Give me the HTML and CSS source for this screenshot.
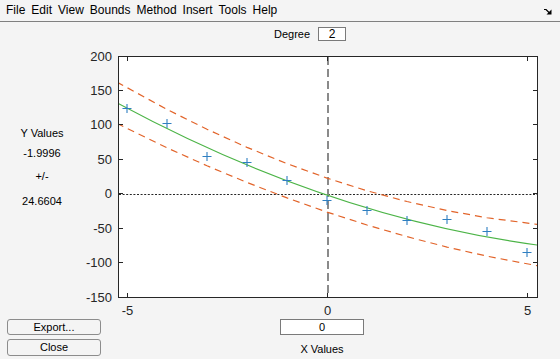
FILE: index.html
```html
<!DOCTYPE html>
<html>
<head>
<meta charset="utf-8">
<link rel="stylesheet" href="styles.css">
</head>
<body>
<div class="window">
  <div class="menubar">
    <span class="menu">File</span>
    <span class="menu">Edit</span>
    <span class="menu">View</span>
    <span class="menu">Bounds</span>
    <span class="menu">Method</span>
    <span class="menu">Insert</span>
    <span class="menu">Tools</span>
    <span class="menu">Help</span>
    <svg class="dock" width="8" height="6" viewBox="0 0 8 6">
      <path d="M0 0.5 H2 L5.5 4" fill="none" stroke="#000" stroke-width="1.2"/>
      <path d="M7.5 0.5 V5.5 H2.5 Z" fill="#000"/>
    </svg>
  </div>

  <div class="degree-row">
    <span class="degree-label">Degree</span>
    <span class="field degree-field">2</span>
  </div>

  <div class="main">
    <div class="yinfo">
      <div class="yline">Y Values</div>
      <div class="yline">-1.9996</div>
      <div class="yline pm">+/-</div>
      <div class="yline sd">24.6604</div>
    </div>
    <svg class="plot" width="476" height="275" viewBox="0 0 476 275">
      <defs>
        <clipPath id="frameclip"><rect x="35" y="13" width="418" height="240"/></clipPath>
      </defs>
      <rect x="34.5" y="12.5" width="419" height="241" fill="#fff"/>
      <g clip-path="url(#frameclip)">
        <line x1="35" y1="150.5" x2="453" y2="150.5" stroke="#262626" stroke-width="1" stroke-dasharray="2 1.6"/>
        <line x1="244" y1="13" x2="244" y2="253" stroke="#8a8a8a" stroke-width="2" stroke-dasharray="8 4"/>
        <polyline fill="none" stroke="#e2642a" stroke-width="1.2" stroke-dasharray="7 5"
          points="33,38.13 83,65.40 123,85.27 163,103.36 203,119.64 243,134.10 283,146.73 323,157.54 363,166.54 403,173.75 453,180.35"/>
        <polyline fill="none" stroke="#e2642a" stroke-width="1.2" stroke-dasharray="7 5"
          points="33,79.44 83,103.80 123,121.79 163,138.48 203,153.89 243,168.06 283,180.98 323,192.65 363,203.06 403,212.16 453,221.67"/>
        <path d="M33 58.8 Q243 172.3 453 201" fill="none" stroke="#4cb447" stroke-width="1.2"/>
        <path fill="none" stroke="#2f7fc1" stroke-width="1.1"
          d="M38.5 64.5 h9 M43 60 v9
             M78.5 79.5 h9 M83 75 v9
             M118.5 112.5 h9 M123 108 v9
             M158.5 118.5 h9 M163 114 v9
             M198.5 136.5 h9 M203 132 v9
             M238.5 156.5 h9 M243 152 v9
             M278.5 166.5 h9 M283 162 v9
             M318.5 176.5 h9 M323 172 v9
             M358.5 175.5 h9 M363 171 v9
             M398.5 187.5 h9 M403 183 v9
             M438.5 208.5 h9 M443 204 v9"/>
      </g>
      <rect x="34.5" y="12.5" width="419" height="241" fill="none" stroke="#262626" stroke-width="1"/>
      <path fill="none" stroke="#262626" stroke-width="1"
        d="M43.5 13 v4 M243.5 13 v4 M443.5 13 v4
           M43.5 253 v-4 M243.5 253 v-4 M443.5 253 v-4
           M35 46.5 h4 M35 80.5 h4 M35 115.5 h4 M35 149.5 h4 M35 184.5 h4 M35 218.5 h4
           M453 46.5 h-4 M453 80.5 h-4 M453 115.5 h-4 M453 149.5 h-4 M453 184.5 h-4 M453 218.5 h-4"/>
      <g class="ticklabel" text-anchor="end">
        <text x="28" y="12.5" dominant-baseline="central">200</text>
        <text x="28" y="46.5" dominant-baseline="central">150</text>
        <text x="28" y="80.9" dominant-baseline="central">100</text>
        <text x="28" y="115.3" dominant-baseline="central">50</text>
        <text x="28" y="149.7" dominant-baseline="central">0</text>
        <text x="28" y="184.1" dominant-baseline="central">-50</text>
        <text x="28" y="218.6" dominant-baseline="central">-100</text>
        <text x="28" y="253" dominant-baseline="central">-150</text>
      </g>
      <g class="ticklabel" text-anchor="middle">
        <text x="43.5" y="266.5" dominant-baseline="central">-5</text>
        <text x="243.5" y="266.5" dominant-baseline="central">0</text>
        <text x="443.5" y="266.5" dominant-baseline="central">5</text>
      </g>
    </svg>
  </div>

  <div class="bottom">
    <button class="btn export">Export...</button>
    <div class="field xval">0</div>
    <button class="btn close">Close</button>
    <div class="xlabel">X Values</div>
  </div>
</div>
</body>
</html>
```

FILE: styles.css
```css
html, body {
  margin: 0;
  padding: 0;
  background: #f4f4f4;
  overflow: hidden;
}

.window {
  width: 560px;
  height: 359px;
  font-family: "Liberation Sans", Arial, sans-serif;
  font-size: 11px;
  color: #1a1a1a;
  display: flex;
  flex-direction: column;
}

.menubar {
  height: 21px;
  line-height: 20px;
  border-bottom: 1px solid #808080;
  display: flex;
  align-items: flex-start;
  padding-left: 3px;
  font-size: 12px;
  color: #000;
}

.menu {
  padding: 0 3px;
}

.dock {
  margin-left: auto;
  margin-right: 8px;
  margin-top: 9px;
}

.degree-row {
  height: 22px;
  display: flex;
  align-items: flex-start;
  padding-left: 274px;
  padding-top: 5px;
  box-sizing: border-box;
}

.degree-label {
  line-height: 14px;
  width: 44px;
  color: #000;
}

.field {
  box-sizing: border-box;
  background: #fff;
  border: 1px solid #7a7a7a;
  text-align: center;
  color: #000;
}

.degree-field {
  width: 28px;
  height: 14px;
  line-height: 13px;
  font-size: 12px;
}

.main {
  height: 275px;
  display: flex;
}

.yinfo {
  width: 84px;
  padding-top: 79px;
  box-sizing: border-box;
  text-align: center;
  color: #000;
}

.yline {
  line-height: 20px;
}

.yline.pm {
  margin-top: 3px;
}

.yline.sd {
  margin-top: 5px;
}

.plot {
  display: block;
}

.ticklabel {
  font-family: "Liberation Sans", Arial, sans-serif;
  font-size: 13px;
  fill: #262626;
}

.bottom {
  display: grid;
  grid-template-columns: 7px 94px 179px 84px 1fr;
  grid-template-rows: 16px 17px;
  row-gap: 4px;
}

.btn {
  font-family: "Liberation Sans", Arial, sans-serif;
  font-size: 11px;
  color: #000;
  background: #f4f4f4;
  border: 1px solid #8c8c8c;
  border-radius: 3px;
  padding: 0;
  margin: 0;
  grid-column: 2;
  line-height: 13px;
}

.btn.export {
  grid-row: 1;
}

.btn.close {
  grid-row: 2;
}

.xval {
  grid-column: 4;
  grid-row: 1;
  line-height: 14px;
  font-size: 11px;
}

.xlabel {
  grid-column: 4;
  grid-row: 2;
  text-align: center;
  line-height: 17px;
  padding-top: 2px;
  color: #000;
}
```
